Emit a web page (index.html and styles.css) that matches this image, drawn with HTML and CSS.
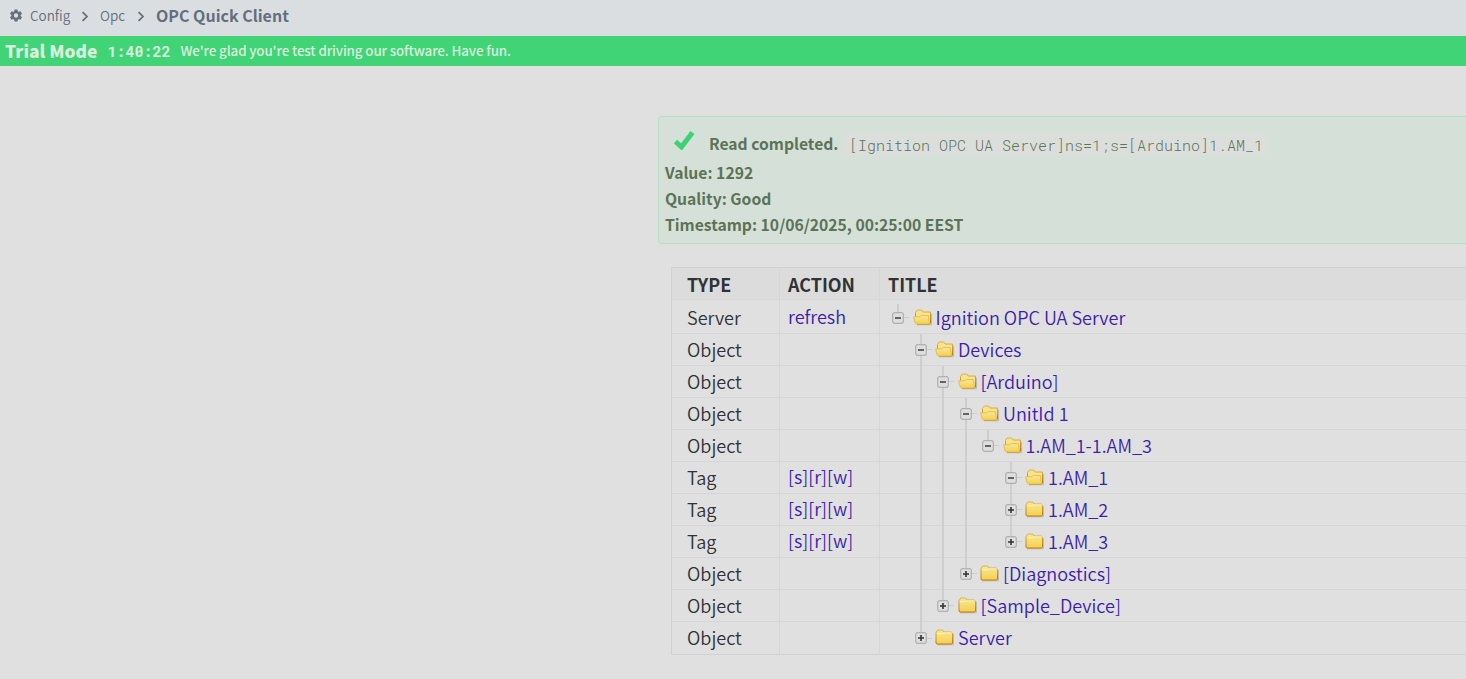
FILE: index.html
```html
<!DOCTYPE html>
<html lang="en">
<head>
<meta charset="utf-8">
<title>OPC Quick Client</title>
<link rel="stylesheet" href="styles.css">
</head>
<body>
<svg class="defs" width="0" height="0" aria-hidden="true">
  <defs>
    <linearGradient id="paper" x1="0" y1="0" x2="0" y2="1"><stop offset="0" stop-color="#f8e795"/><stop offset="1" stop-color="#f5d04f"/></linearGradient>
    <linearGradient id="edge" x1="0" y1="0" x2="0" y2="1"><stop offset="0" stop-color="#dcb449"/><stop offset="1" stop-color="#b8770c"/></linearGradient>
  </defs>
  <symbol id="minus" viewBox="0 0 12 12"><rect x=".7" y=".7" width="10.6" height="10.6" rx="2" fill="#dedede" stroke="#b0b0b0" stroke-width="1.2"/><path d="M3 6h6" stroke="#444" stroke-width="1.6"/></symbol>
  <symbol id="plus" viewBox="0 0 12 12"><rect x=".7" y=".7" width="10.6" height="10.6" rx="2" fill="#dedede" stroke="#b0b0b0" stroke-width="1.2"/><path d="M3 6h6M6 3v6" stroke="#333" stroke-width="1.6"/></symbol>
  <symbol id="closed" viewBox="0 0 20 17"><path d="M2 15.8h16.4V5" fill="none" stroke="#bcb8ac"/><path d="M1 14V3.6L2.8 1h4.7L9 3h7.200l1.300 1.200V14l-.8 1H1.800z" fill="url(#paper)" stroke="url(#edge)"/><path d="M2 4.800h5.500L9 3.800h7.500" fill="none" stroke="#fbf2c0"/></symbol>
  <symbol id="open" viewBox="0 0 20 17"><path d="M4 15.800h14.600V5" fill="none" stroke="#bcb8ac"/><path d="M2.500 7V3.500L4.200 1h4.500L10.200 3h7.300v11l-1 1H4z" fill="#f8e28a" stroke="url(#edge)"/><path d="M.6 7.800h6.200l1.500-1.200h7L16.500 14.200l-.8.8H3.400L2.200 14z" fill="url(#paper)" stroke="#dfb548" stroke-width=".8"/></symbol>
</svg>

<nav class="crumbs">
  <svg class="gear" viewBox="0 0 14 14"><path fill-rule="evenodd" d="M5.500.5h3l.3 1.800 1 .6 1.700-.7 1.500 2.600-1.400 1.100v1.200l1.400 1.100-1.500 2.600-1.700-.7-1 .6-.3 1.800h-3l-.3-1.800-1-.6-1.700.7L1 8.200l1.400-1.100V5.900L1 4.800l1.500-2.600 1.700.7 1-.6zM7 4.300a2.200 2.200 0 1 0 0 4.400 2.200 2.200 0 0 0 0-4.400z" fill="#646e7f"/></svg>
  <a class="crumb config">Config</a>
  <svg class="chev" viewBox="0 0 7 10"><path d="M1.300 1l4 4-4 4" /></svg>
  <a class="crumb opc">Opc</a>
  <svg class="chev" viewBox="0 0 7 10"><path d="M1.300 1l4 4-4 4" /></svg>
  <h1 class="crumb-title">OPC Quick Client</h1>
</nav>
<div class="trial">
  <strong class="mode">Trial Mode</strong>
  <span class="clock">1:40:22</span>
  <span class="note">We're glad you're test driving our software. Have fun.</span>
</div>

<main class="content">
  <section class="alert">
    <div class="alert-head">
      <svg class="check" viewBox="0 0 22 20"><path d="M2.500 11.500l6 5.500L19.500 2.500" fill="none" stroke="#3fd175" stroke-width="5"/></svg>
      <span class="done">Read completed.</span>
      <code class="path">[Ignition OPC UA Server]ns=1;s=[Arduino]1.AM_1</code>
    </div>
    <div class="line value">Value: 1292</div>
    <div class="line quality">Quality: Good</div>
    <div class="line stamp">Timestamp: 10/06/2025, 00:25:00 EEST</div>
  </section>

  <section class="grid">
    <div class="row head"><div class="type">TYPE</div><div class="action">ACTION</div><div class="title">TITLE</div></div>
    <div class="row first"><div class="type">Server</div><div class="action"><a>refresh</a></div><div class="title"><i class="node up"><svg><use href="#minus"/></svg></i><svg class="folder"><use href="#open"/></svg><a>Ignition OPC UA Server</a></div></div>
    <div class="row"><div class="type">Object</div><div class="action"></div><div class="title"><i class="gap"></i><i class="node full"><svg><use href="#minus"/></svg></i><svg class="folder"><use href="#open"/></svg><a>Devices</a></div></div>
    <div class="row"><div class="type">Object</div><div class="action"></div><div class="title"><i class="gap"></i><i class="gap full"></i><i class="node full"><svg><use href="#minus"/></svg></i><svg class="folder"><use href="#open"/></svg><a>[Arduino]</a></div></div>
    <div class="row"><div class="type">Object</div><div class="action"></div><div class="title"><i class="gap"></i><i class="gap full"></i><i class="gap full"></i><i class="node full"><svg><use href="#minus"/></svg></i><svg class="folder"><use href="#open"/></svg><a>UnitId 1</a></div></div>
    <div class="row"><div class="type">Object</div><div class="action"></div><div class="title"><i class="gap"></i><i class="gap full"></i><i class="gap full"></i><i class="gap full"></i><i class="node up"><svg><use href="#minus"/></svg></i><svg class="folder"><use href="#open"/></svg><a>1.AM_1-1.AM_3</a></div></div>
    <div class="row"><div class="type">Tag</div><div class="action"><a>[s][r][w]</a></div><div class="title"><i class="gap"></i><i class="gap full"></i><i class="gap full"></i><i class="gap full"></i><i class="gap"></i><i class="node full"><svg><use href="#minus"/></svg></i><svg class="folder"><use href="#open"/></svg><a>1.AM_1</a></div></div>
    <div class="row"><div class="type">Tag</div><div class="action"><a>[s][r][w]</a></div><div class="title"><i class="gap"></i><i class="gap full"></i><i class="gap full"></i><i class="gap full"></i><i class="gap"></i><i class="node full"><svg><use href="#plus"/></svg></i><svg class="folder"><use href="#closed"/></svg><a>1.AM_2</a></div></div>
    <div class="row"><div class="type">Tag</div><div class="action"><a>[s][r][w]</a></div><div class="title"><i class="gap"></i><i class="gap full"></i><i class="gap full"></i><i class="gap full"></i><i class="gap"></i><i class="node up"><svg><use href="#plus"/></svg></i><svg class="folder"><use href="#closed"/></svg><a>1.AM_3</a></div></div>
    <div class="row"><div class="type">Object</div><div class="action"></div><div class="title"><i class="gap"></i><i class="gap full"></i><i class="gap full"></i><i class="node up"><svg><use href="#plus"/></svg></i><svg class="folder"><use href="#closed"/></svg><a>[Diagnostics]</a></div></div>
    <div class="row"><div class="type">Object</div><div class="action"></div><div class="title"><i class="gap"></i><i class="gap full"></i><i class="node up"><svg><use href="#plus"/></svg></i><svg class="folder"><use href="#closed"/></svg><a>[Sample_Device]</a></div></div>
    <div class="row last"><div class="type">Object</div><div class="action"></div><div class="title"><i class="gap"></i><i class="node up"><svg><use href="#plus"/></svg></i><svg class="folder"><use href="#closed"/></svg><a>Server</a></div></div>
  </section>
</main>
</body>
</html>
```
FILE: styles.css
```css
* { box-sizing: border-box; }
body {
  margin: 0;
  height: 679px;
  overflow: hidden;
  background: #e0e0e0;
  color: #303236;
  font-family: "Noto Sans CJK SC", "Noto Sans CJK JP", "Open Sans", sans-serif;
}
.defs { display: block; }
svg { flex: none; }

.crumbs {
  display: flex;
  align-items: center;
  height: 36px;
  padding: 0 0 4px 9px;
  background: #dadee1;
  color: #646e7f;
  line-height: 30px;
  white-space: nowrap;
}
.gear { width: 14px; height: 14px; margin: 0 7px 0 0; }
.crumb { height: 32px; font-size: 13.5px; font-weight: 350; }
.config { width: 51px; }
.opc { width: 37px; }
.chev { width: 8px; height: 11px; margin-right: -1px; fill: none; stroke: #646e7f; stroke-width: 1.6; }
.chev + .opc { margin-left: 12px; }
.crumb-title { height: 32px; margin: 0 0 0 12px; font-size: 16px; font-weight: 700; }

.trial {
  display: flex;
  height: 30px;
  padding-left: 5px;
  background: #41d477;
  color: #d9f0dc;
  line-height: 29px;
  white-space: nowrap;
}
.mode { width: 102px; font-size: 17.4px; font-weight: 900; line-height: 30px; }
.clock { width: 73px; padding-left: .5px; font: 700 15px/30px "Roboto Mono", "DejaVu Sans Mono", monospace; }
.note { font-size: 13.4px; font-weight: 500; letter-spacing: -0.14px; padding-left: .5px; }

.content { padding: 50px 0 0 658px; white-space: nowrap; }
.alert {
  height: 128px;
  padding: 12px 0 0 6px;
  border: 1px solid #b9dfc7;
  border-right: 0;
  border-radius: 4px 0 0 4px;
  background: #d5e1d8;
  color: #5c7357;
}
.alert-head { display: flex; align-items: center; height: 31px; }
.check { width: 22px; height: 20px; margin: 0 14px 9px 8px; }
.done { width: 135px; padding-bottom: 2px; font-size: 15.66px; font-weight: 700; }
.path {
  height: 23px;
  margin-bottom: 1px;
  padding: 0 5px;
  border-radius: 3px;
  background: #dcdedc;
  font: 350 15px/24px "Roboto Mono", "Liberation Mono", monospace;
}
.line { height: 26px; font-size: 15.7px; font-weight: 700; line-height: 26px; }

.grid { margin: 23px 0 0 13px; border: solid #d0d1d1; border-width: 1px 0 1px 1px; }
.row {
  display: grid;
  grid-template-columns: 108px 100px 1fr;
  height: 32px;
  border-bottom: 1px solid #d5d6d6;
  font-size: 18.06px;
  font-weight: 350;
  line-height: 30px;
}
.row.first { height: 34px; line-height: 34px; }
.row.last { border-bottom: 0; }
.row > div { height: 100%; }
.type { padding-left: 15px; border-right: 1px solid #d5d6d6; }
.action { padding-left: 8px; border-right: 1px solid #d5d6d6; line-height: 29px; }
.first .action { line-height: 32px; }
.row a { color: #3c1ea8; }
.title { display: flex; padding-left: 7px; }
.row.head { background: #dcdcdc; font-size: 17.9px; font-weight: 700; }
.head > div { line-height: 32px; }
.head .title { padding-left: 8px; }

/* tree guides */
.gap, .node {
  flex: none;
  width: 22.5px;
  height: calc(100% + 1px);
  background: no-repeat 10px 0 / 2px 0 linear-gradient(#cecece, #cecece);
}
.full { background-size: 2px 100%; }
.up { background-size: 2px 50%; }
.node { display: flex; align-items: center; padding: 0 0 1px 5px; }
.node::after { content: ""; width: 5px; height: 1px; background: #cccccc; }
.node svg { width: 12px; height: 12px; }
.folder { width: 20px; height: 17px; margin: 7px 3px 0 3px; }
.first .folder { margin-top: 9px; }
.first .up { padding-top: 1px; background-position: 10px 4px; background-size: 2px 14px; }
```
